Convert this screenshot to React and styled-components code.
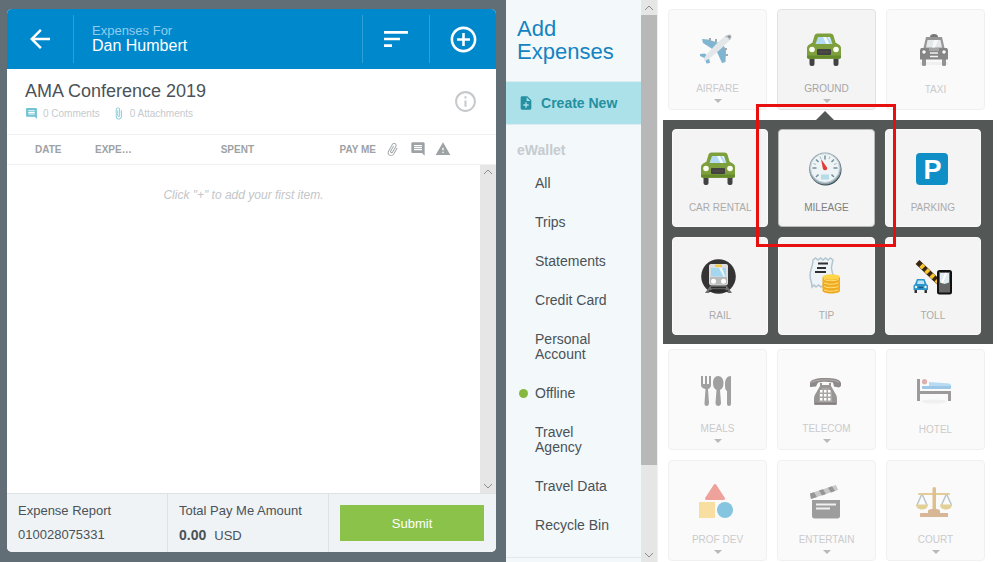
import React from "react";
import styled, { createGlobalStyle, css } from "styled-components";
import {
  MdArrowBack,
  MdSort,
  MdAddCircleOutline,
  MdInfoOutline,
  MdComment,
  MdAttachFile,
  MdWarning,
  MdNoteAdd,
} from "react-icons/md";

const GlobalStyle = createGlobalStyle`
  *, *::before, *::after { box-sizing: border-box; }
  body {
    margin: 0;
    background: #fff;
    color: #4a5257;
    font-family: "Liberation Sans", Arial, sans-serif;
    font-size: 14px;
  }
  h1, h2, h3, p, ul { margin: 0; padding: 0; font-weight: normal; }
  ul { list-style: none; }
  button { font: inherit; border: 0; padding: 0; background: none; cursor: pointer; }
  svg { display: block; flex: none; }
`;

const Page = styled.div`
  display: grid;
  grid-template-columns: minmax(0, 1fr) 152px 34%;
  height: 100vh;
  overflow: hidden;
`;

/* Report */

const Stage = styled.main`
  display: flex;
  min-height: 0;
  padding: 9px 10px 10px 7px;
  background: #616e76;
`;

const Report = styled.section`
  display: flex;
  flex: 1;
  flex-direction: column;
  min-width: 0;
  overflow: hidden;
  border-radius: 5px;
  background: #fff;
`;

const ReportBar = styled.header`
  display: flex;
  height: 60px;
  padding: 6px 0;
  background: #0088cd;
  color: #fff;
`;

const BarButton = styled.button`
  display: flex;
  align-items: center;
  justify-content: center;
  width: 67px;
  color: #fff;
  border: solid #2f9fd8;
  border-width: ${(p) => (p.$first ? "0 1px 0 0" : "0 0 0 1px")};
`;

const Owner = styled.div`
  flex: 1;
  padding: 9px 18px;
`;

const OwnerLabel = styled.p`
  font-size: 13px;
  line-height: 14px;
  color: #8fcdee;
`;

const OwnerName = styled.p`
  font-size: 16px;
  line-height: 16px;
`;

const Summary = styled.div`
  display: flex;
  align-items: center;
  justify-content: space-between;
  height: 66px;
  padding: 0 18px;
  border-bottom: 1px solid #f0f1f2;
`;

const SummaryText = styled.div`
  padding-bottom: 3px;
`;

const ReportTitle = styled.h1`
  font-size: 18px;
  line-height: 22px;
`;

const Counts = styled.div`
  display: flex;
  gap: 12px;
  padding-top: 5px;
`;

const Count = styled.span`
  display: flex;
  align-items: center;
  gap: 5px;
  font-size: 10px;
  line-height: 14px;
  color: #c6cacd;

  svg { color: #6fc3d3; }
`;

const InfoButton = styled.button`
  color: #c6cacd;
`;

const Columns = styled.table`
  width: 100%;
  table-layout: fixed;
  border-collapse: collapse;
`;

const Column = styled.th`
  width: ${(p) => p.$width || "auto"};
  height: 29px;
  padding: ${(p) => p.$pad || "0"};
  border-bottom: 1px solid #f0f1f2;
  font-size: 10px;
  font-weight: bold;
  color: #9da2a5;
  text-align: ${(p) => p.$align || "left"};

  svg { margin: 0 auto; }
`;

const Clip = styled(MdAttachFile)`
  transform: rotate(30deg);
`;

const Items = styled.div`
  display: flex;
  flex: 1;
  min-height: 0;
`;

const EmptyNote = styled.p`
  flex: 1;
  padding-top: 23px;
  font-size: 12px;
  line-height: 14px;
  font-style: italic;
  text-align: center;
  color: #c3c6c8;
`;

const Track = styled.div`
  display: flex;
  flex-direction: column;
  width: 16px;
  background: #e6e6e6;
`;

const TrackButton = styled.button`
  display: flex;
  align-items: center;
  justify-content: center;
  height: 15px;
`;

const Thumb = styled.div`
  flex: ${(p) => p.$share};
  background: ${(p) => (p.$clear ? "transparent" : "#b8b8b8")};
`;

const Totals = styled.footer`
  display: grid;
  grid-template-columns: 161fr 161fr 167fr;
  height: 59px;
  border-top: 1px solid #dde2e5;
  background: #eff3f6;
`;

const Total = styled.div`
  padding: 8px 11px;
  border-right: 1px solid #dde2e5;
  font-size: 13px;
  line-height: 18px;
  white-space: nowrap;

  p + p { padding-top: 6px; }
`;

const Amount = styled.strong`
  margin-right: 8px;
  font-size: 14px;
`;

const SubmitCell = styled.div`
  display: flex;
  padding: 11px 12px 11px 11px;
`;

const Submit = styled.button`
  flex: 1;
  height: 36px;
  background: #8bc34a;
  color: #fff;
  font-size: 13px;
`;

/* Sources */

const Sources = styled.aside`
  display: flex;
  min-height: 0;
  border-right: 1px solid #f0f0f0;
  background: #f3f8fb;
`;

const SourcesBody = styled.div`
  flex: 1;
  min-width: 0;
  overflow: hidden;
`;

const SourcesTitle = styled.h2`
  padding: 17px 11px 18px;
  font-size: 22px;
  line-height: 23px;
  color: #1483c2;
`;

const CreateNew = styled.button`
  display: flex;
  align-items: center;
  gap: 7px;
  width: 100%;
  height: 44px;
  padding: 0 12px;
  border: solid #d9ecf1;
  border-width: 1px 0;
  background: #ace1ea;
  color: #2490a0;
  font-weight: bold;
`;

const GroupTitle = styled.h3`
  padding: 18px 11px 6px;
  font-size: 14px;
  line-height: 15px;
  font-weight: bold;
  color: #c6cbce;
`;

const SourceList = styled.ul`
  padding-bottom: 12px;
  border-bottom: 1px solid #e2e8ec;
`;

const SourceLink = styled.a`
  display: grid;
  grid-template-columns: 9px 1fr;
  column-gap: 7px;
  align-items: center;
  padding: 12px 22px 12px 13px;
  line-height: 15px;
  color: inherit;
  text-decoration: none;
`;

const Dot = styled.span`
  width: 9px;
  height: 9px;
  border-radius: 50%;
  background: ${(p) => (p.$on ? "#86b840" : "transparent")};
`;

/* Expense types */

const Types = styled.section`
  display: flex;
  flex-direction: column;
  min-width: 0;
  padding-top: 9px;
  overflow: hidden;
`;

const TypeGrid = styled.div`
  display: grid;
  grid-template-columns: repeat(3, minmax(0, 1fr));
  gap: 10px;
  padding: 0 12px 0 10px;
`;

const SubTypes = styled(TypeGrid)`
  margin: 10px 4px 5px 5px;
  padding: 9px 12px 9px 9px;
  background: #535755;
`;

const highlight = css`
  &::after {
    content: "";
    position: absolute;
    z-index: 2;
    inset: -26px -22px -21px -23px;
    border: 3px solid #e8100f;
    pointer-events: none;
  }
`;

const pointer = css`
  &::before {
    content: "";
    position: absolute;
    z-index: 1;
    bottom: -11px;
    left: 50%;
    margin-left: -11px;
    border: solid transparent;
    border-width: 0 9px 9px;
    border-bottom-color: #535755;
  }
`;

const tones = {
  faded: css`background: #fafafa; border-color: #f0f0f0; color: #cbcbcb;`,
  open: css`background: #f4f4f4; border-color: #e2e2e2; color: #a6a6a6;`,
  plain: css`background: #f4f4f4; border-color: #fafafa; color: #ababab;`,
  marked: css`background: #f4f4f4; border-color: #b9bbba; color: #7d7d7d;`,
};

const Tile = styled.button`
  position: relative;
  display: flex;
  flex-direction: column;
  align-items: center;
  height: ${(p) => (p.$sub ? "98px" : "101px")};
  padding-top: ${(p) => (p.$sub ? "22px" : "23px")};
  border: 1px solid;
  border-radius: 4px;
  ${(p) => tones[p.$tone]}
  ${(p) => p.$tone === "open" && pointer}
  ${(p) => p.$tone === "marked" && highlight}
`;

const TileLabel = styled.span`
  padding-top: ${(p) => (p.$low ? "16px" : "15px")};
  font-size: 10px;
  line-height: 12px;
  white-space: nowrap;
`;

const Caret = styled.span`
  margin-top: 4px;
  border: solid transparent;
  border-width: 4px 4px 0;
  border-top-color: #b9b9b9;
`;

const Art = ({ children }) => (
  <svg width="39" height="35" viewBox="0 0 39 35" overflow="visible" aria-hidden="true">
    {children}
  </svg>
);

const Chevron = ({ up }) => (
  <svg width="10" height="6" viewBox="0 0 10 6" fill="none" stroke="#8c8c8c" aria-hidden="true">
    <path d={up ? "M1 5l4-4 4 4" : "M1 1l4 4 4-4"} />
  </svg>
);

const Plane = () => (
  <Art>
    <path d="M4 6l6 .5L24 11l4 5-.5 13-3.500 1L19 19 5 10z" fill="#7fb5d0" />
    <path d="M2 21l5-.5 4 4.500 1 5-3.500.5-2-5.500L2 23z" fill="#7fb5d0" />
    <path d="M11 5h2v3h-2zM17 6h2v3h-2zM26 15h3v2h-3zM27 21h3v2h-3z" fill="#a3abb0" />
    <path d="M6 26c1-4 14-17 20-22 3-2.500 6-3 7-2s0 4-2 6C25 14 12 26 8 27.500c-1.500.5-2.500 0-2-1.500z" fill="#e3e7ea" />
    <path d="M27 3.500c2-1.500 5-2.200 6-1.500.8 1 .3 3-1 5l-1.500-.5.5-2-2 .3z" fill="#b9bdc0" />
    <path d="M30 2.500l2.500 1-.5 2-2-1z" fill="#8b8f92" />
  </Art>
);

const Car = () => (
  <Art>
    <rect x="2.500" y="23" width="5" height="10" rx="2" fill="#424242" />
    <rect x="26.500" y="23" width="5" height="10" rx="2" fill="#424242" />
    <path d="M10.500.5h13c1.500 0 2.500.8 3 2l2 7 4 2.500c1 .7 1.500 2 1.500 3.500V24c0 1-.7 1.700-1.700 1.700H1.700C.7 25.700 0 25 0 24v-8.500c0-1.500.5-2.800 1.500-3.500l4-2.500 2-7c.5-1.200 1.500-2 3-2z" fill="#7ea03c" />
    <path d="M0 22.500h34V24c0 1-.7 1.700-1.700 1.700H1.700C.7 25.700 0 25 0 24z" fill="#658a2c" />
    <path d="M11 4h12l2.500 7h-17z" fill="#b5dbf3" />
    <path d="M16 4h3l3.500 7h-3zM21 4h1.500l2 5.500z" fill="#f2fafd" />
    <circle cx="5" cy="16.500" r="2.800" fill="#fbfdf0" />
    <circle cx="29" cy="16.500" r="2.800" fill="#fbfdf0" />
    <rect x="10" y="16" width="14" height="6" rx="1" fill="#424242" />
    <path d="M12 19h10" stroke="#5d5148" />
  </Art>
);

const Taxi = () => (
  <Art>
    <path d="M4 29h28v3H4z" fill="#f0f0f0" />
    <rect x="6" y="24" width="4" height="9" rx="1.500" fill="#929292" />
    <rect x="26" y="24" width="4" height="9" rx="1.500" fill="#929292" />
    <path d="M14 4c0-2 1.500-3 4-3s4 1 4 3z" fill="#777" />
    <path d="M10 4h16l2.500 11h-21z" fill="#969696" />
    <path d="M11.500 7h13l1.500 7.500H10z" fill="#e4e8e9" />
    <path d="M18 7h4l-3 7.500h-3z" fill="#f7f9f9" />
    <path d="M5 15h26l1 2v9.500H4V17z" fill="#868686" />
    <path d="M13 15h10v3H13z" fill="#a5a5a5" />
    <circle cx="8" cy="19" r="2.300" fill="#fafafa" stroke="#777" />
    <circle cx="28" cy="19" r="2.300" fill="#fafafa" stroke="#777" />
    <path d="M14 20h8M14 23.500h8" stroke="#f2f2f2" strokeWidth="1.500" />
  </Art>
);

const Gauge = () => (
  <Art>
    <circle cx="18.500" cy="17.500" r="16" fill="#37474f" />
    <circle cx="18" cy="16.500" r="16" fill="#8fa4ae" />
    <circle cx="18" cy="16" r="14.500" fill="#eef3f5" stroke="#c3d0d6" />
    <g stroke="#78909c" strokeWidth="1.500">
      <path d="M18 3.500v4M5.500 16h4M26.500 16h4M9 7.500l2.500 2.500M27 7.500L24.500 10M9 25l2.500-2.500M27 25l-2.500-2.500" />
    </g>
    <path d="M13 4.500l1 2.500M23 4.500L22 7M6.500 11.500l2.500 1M29.500 11.500l-2.500 1" stroke="#a9bac2" />
    <rect x="14" y="22.500" width="8" height="5" fill="#b4dce9" />
    <path d="M14 7l6 8.500c.7 1.500-.5 3-2 2.800-1.200 0-2-.8-2.200-2z" fill="#e53935" />
  </Art>
);

const Parking = () => (
  <Art>
    <rect x="3" y="1" width="32" height="32" rx="4" fill="#0f8fc5" />
    <text x="19.500" y="26.500" textAnchor="middle" fontFamily="Liberation Sans, Arial, sans-serif" fontSize="27" fontWeight="bold" fill="#fff">P</text>
  </Art>
);

const Rail = () => (
  <Art>
    <circle cx="17.500" cy="16.500" r="17.300" fill="#353334" />
    <path d="M9 26l-5 7h4l3-4h13l3 4h4l-5-7z" fill="#6f6f6f" />
    <path d="M10 27.500h15M8 31h19" stroke="#2d2d2d" strokeWidth="1.500" />
    <path d="M10 4h15c1.500 0 2 1 2 2v17c0 1.500-1 2.500-2.500 2.500h-14C9 25.500 8 24.500 8 23V6c0-1 .5-2 2-2z" fill="#dcdedf" />
    <path d="M9 17h17v5.500c0 1-.8 2-2 2H11c-1.200 0-2-1-2-2z" fill="#b9bbbb" />
    <rect x="14" y="4.500" width="7" height="2.500" fill="#f3ca4a" />
    <rect x="10" y="8" width="15" height="8.500" fill="#a3d6ef" />
    <path d="M18 8h3l3 8.500h-1.500z" fill="#eef8fd" />
    <circle cx="12.500" cy="21.300" r="2.500" fill="#fff" />
    <circle cx="22.500" cy="21.300" r="2.500" fill="#fff" />
  </Art>
);

const Coin = ({ y }) => (
  <>
    <path d={`M15.500 ${y}v3c0 1.800 4 3 8.800 3s8.700-1.200 8.700-3v-3z`} fill="#f0a71e" />
    <ellipse cx="24.250" cy={y} rx="8.750" ry="2.700" fill="#ffd54a" />
    <path d={`M17 ${y + 2.500}c3 1.700 11 1.700 14.500 0`} stroke="#ffe078" fill="none" />
  </>
);

const Tip = () => (
  <Art>
    <path d="M6 0l2.500-2 2.500 2 2.500-2L16 0l2.500-2L21 0l2.500-2L26 0c-.5 3-1.500 5-1.500 8s1.500 5 1.500 8v9l-2 2-2.500-2-2.500 2-2.500-2-2.500 2-2.500-2L9 27l-2-2-2 2c0-5-2-7-2-12S6 6 6 0z" fill="#edf3f6" stroke="#b3c6cf" strokeWidth="1.500" />
    <path d="M11 3.500h10M10 8h9M8 12h11" stroke="#303030" strokeWidth="1.800" />
    <Coin y={27.500} />
    <Coin y={24} />
    <Coin y={20.500} />
    <Coin y={17} />
  </Art>
);

const Toll = () => (
  <Art>
    <path d="M4.500 2L26 22.500" stroke="#3a2412" strokeWidth="5.500" />
    <path d="M8 5.300L26 22.500" stroke="#f7c62f" strokeWidth="5" strokeDasharray="3.500 3.500" />
    <rect x="25" y="11" width="13" height="22.500" rx="1.500" fill="#666" stroke="#111" strokeWidth="2" />
    <path d="M27 13h9v9.500l-4.500 1.500-4.500-1.500z" fill="#dfeaf1" />
    <path d="M33 13l-4 10" stroke="#fff" strokeWidth="2" />
    <rect x="1.500" y="29" width="2.500" height="4" fill="#333" />
    <rect x="11.500" y="29" width="2.500" height="4" fill="#333" />
    <path d="M4 19h7.500l2 5 1.500 1.500V30H.5v-4.500L2 24z" fill="#2b95cc" />
    <path d="M5 20.500h5.500l1 3.500H4z" fill="#bfe4f6" />
    <circle cx="3" cy="27" r="1.200" fill="#e8f6fc" />
    <circle cx="12.500" cy="27" r="1.200" fill="#e8f6fc" />
    <path d="M5.500 27.500h4.500" stroke="#16597d" strokeWidth="1.500" />
  </Art>
);

const Meals = () => (
  <Art>
    <g fill="#a0a0a0">
      <path d="M3 3h2v8h2V3h2v8h2V3h2v9c0 2-1.200 3.500-3 4l1 14c0 4-5 4-4.500 0l1-14C4.500 15.500 3 14 3 12z" />
      <path d="M20 3c3.500 0 5.500 3 5.500 7s-1.500 6-3.500 7l1 13c0 4-5.500 4-5.500 0l1-13c-2-1-3.500-3-3.500-7s2-7 5-7z" />
      <path d="M33 3v28c0 2.500-4 2.500-4 0V18c-2-1-2-4-2-7 0-5 2-8 6-8z" />
    </g>
  </Art>
);

const Phone = () => (
  <Art>
    <path d="M3 10c0-3 6-5 15-5s15 1 16 5v3l-2 1.500-5-1-1-4c-5-1-11-1-15 0l-2 4-6 .5z" fill="#8e8a8a" />
    <path d="M4 9.500c4-3 24-4 28 0" stroke="#b5b1b1" fill="none" />
    <path d="M13 10v3l-4 7c-1.500 2-2 4-2 6v4.500c0 1 .7 1.500 1.500 1.500h20c.8 0 1.500-.5 1.500-1.500V26c0-2-.5-4-2-6l-4-7v-3h-2v2h-7v-2z" fill="#999595" />
    <path d="M15 15h7l3 5v9H12v-9z" fill="#aaa6a6" />
    <g fill="#fff">
      {[17, 21, 25].map((y) =>
        [13, 17, 21].map((x) => <rect key={`${x}-${y}`} x={x} y={y} width="2.500" height="2.500" />)
      )}
    </g>
    <path d="M8 30.500h21" stroke="#827e7e" strokeWidth="1.500" />
  </Art>
);

const Bed = () => (
  <Art>
    <ellipse cx="18" cy="28.500" rx="13" ry="2" fill="#f0f0f0" />
    <path d="M1 6h3v12h31v10h-3v-7H4v7H1z" fill="#9c9a9b" />
    <circle cx="8.500" cy="8.700" r="2.600" fill="#ddb2ac" />
    <path d="M13 9l20 1.500c1.500.3 2 1 2 2V14H13z" fill="#b6dbf2" />
    <path d="M6 13h29v1.500c0 1-.7 1.500-1.500 1.500H7.500C6.500 16 6 15.500 6 14.500z" fill="#9cc8e6" />
  </Art>
);

const Shapes = () => (
  <Art>
    <path d="M17 1.500L25.500 14.500H8.500z" fill="#efa29b" stroke="#efa29b" strokeWidth="3" strokeLinejoin="round" />
    <rect x="1" y="18" width="16" height="16" fill="#f8dfa1" />
    <circle cx="27" cy="26" r="8" fill="#86c5df" />
  </Art>
);

const Clapper = () => (
  <Art>
    <path d="M3 9.500L29 1l2 5-27 9z" fill="#c8c8c8" />
    <path d="M3 9.500l4-1.300 3 4.800-6 2zM12 6.500l4-1.300 3 4.800-4 1.400zM21 3.700l4-1.400 3 4.700-4 1.400z" fill="#969696" />
    <path d="M5 16h28v16c0 1.500-1 2.500-2.500 2.500h-23C6 34.500 5 33.500 5 32z" fill="#9d9d9d" />
    <path d="M9 20.500h20M9 24.500h14" stroke="#f0f0f0" strokeWidth="2" />
  </Art>
);

const Scales = () => (
  <Art>
    <path d="M5.500 11L1 21M6.500 11L11 21M30 11l-4.500 10M31 11l4.500 10" stroke="#b9c5cb" strokeWidth="1.500" />
    <rect x="2" y="9" width="32" height="2" rx="1" fill="#e4cc98" />
    <rect x="16.500" y="3" width="3.500" height="25" rx="1.500" fill="#dec08f" />
    <path d="M0 20.500h12c0 3-2.500 5-6 5s-6-2-6-5zM24 20.500h12c0 3-2.500 5-6 5s-6-2-6-5z" fill="#e3d096" />
    <path d="M12 27c0-1.500 2-2 6-2s6 .5 6 2v2h8v4H4v-3c0-.7.5-1 1-1h7z" fill="#d7b795" />
  </Art>
);

const ROWS = [
  [
    { label: "AIRFARE", Icon: Plane, more: true },
    { label: "GROUND", Icon: Car, more: true, tone: "open" },
    { label: "TAXI", Icon: Taxi },
  ],
  [
    { label: "MEALS", Icon: Meals, more: true },
    { label: "TELECOM", Icon: Phone, more: true },
    { label: "HOTEL", Icon: Bed },
    { label: "PROF DEV", Icon: Shapes, more: true },
    { label: "ENTERTAIN", Icon: Clapper, more: true },
    { label: "COURT", Icon: Scales, more: true },
  ],
];

const GROUND = [
  { label: "CAR RENTAL", Icon: Car },
  { label: "MILEAGE", Icon: Gauge, tone: "marked" },
  { label: "PARKING", Icon: Parking },
  { label: "RAIL", Icon: Rail },
  { label: "TIP", Icon: Tip },
  { label: "TOLL", Icon: Toll },
];

const SOURCES = [
  "All",
  "Trips",
  "Statements",
  "Credit Card",
  "Personal Account",
  "Offline",
  "Travel Agency",
  "Travel Data",
  "Recycle Bin",
];

const TypeTile = ({ label, Icon, more, tone, sub }) => (
  <Tile type="button" $sub={sub} $tone={tone || (sub ? "plain" : "faded")}>
    <Icon />
    <TileLabel $low={!sub && !more}>{label}</TileLabel>
    {more && <Caret />}
  </Tile>
);

export default function App() {
  return (
    <>
      <GlobalStyle />
      <Page>
        <Stage>
          <Report>
            <ReportBar>
              <BarButton type="button" $first aria-label="Back">
                <MdArrowBack size={30} />
              </BarButton>
              <Owner>
                <OwnerLabel>Expenses For</OwnerLabel>
                <OwnerName>Dan Humbert</OwnerName>
              </Owner>
              <BarButton type="button" aria-label="Sort">
                <MdSort size={32} />
              </BarButton>
              <BarButton type="button" aria-label="Add expense">
                <MdAddCircleOutline size={31} />
              </BarButton>
            </ReportBar>
            <Summary>
              <SummaryText>
                <ReportTitle>AMA Conference 2019</ReportTitle>
                <Counts>
                  <Count>
                    <MdComment size={13} />0 Comments
                  </Count>
                  <Count>
                    <MdAttachFile size={13} />0 Attachments
                  </Count>
                </Counts>
              </SummaryText>
              <InfoButton type="button" aria-label="Report details">
                <MdInfoOutline size={25} />
              </InfoButton>
            </Summary>
            <Columns>
              <thead>
                <tr>
                  <Column $width="88px" $pad="0 0 0 28px">DATE</Column>
                  <Column $width="62px">EXPE…</Column>
                  <Column $align="right">SPENT</Column>
                  <Column $width="126px" $align="right" $pad="0 4px 0 0">PAY ME</Column>
                  <Column $width="25px" aria-label="Attachments"><Clip size={15} /></Column>
                  <Column $width="25px" aria-label="Comments"><MdComment size={16} /></Column>
                  <Column $width="25px" aria-label="Warnings"><MdWarning size={16} /></Column>
                  <Column $width="41px" aria-hidden="true" />
                </tr>
              </thead>
            </Columns>
            <Items>
              <EmptyNote>Click "+" to add your first item.</EmptyNote>
              <Track>
                <TrackButton type="button" aria-label="Scroll up"><Chevron up /></TrackButton>
                <Thumb $share={1} $clear />
                <TrackButton type="button" aria-label="Scroll down"><Chevron /></TrackButton>
              </Track>
            </Items>
            <Totals>
              <Total>
                <p>Expense Report</p>
                <p>010028075331</p>
              </Total>
              <Total>
                <p>Total Pay Me Amount</p>
                <p><Amount>0.00</Amount>USD</p>
              </Total>
              <SubmitCell>
                <Submit type="button">Submit</Submit>
              </SubmitCell>
            </Totals>
          </Report>
        </Stage>

        <Sources>
          <SourcesBody>
            <SourcesTitle>Add Expenses</SourcesTitle>
            <CreateNew type="button">
              <MdNoteAdd size={16} />
              Create New
            </CreateNew>
            <GroupTitle>eWallet</GroupTitle>
            <SourceList>
              {SOURCES.map((name) => (
                <li key={name}>
                  <SourceLink href="#">
                    <Dot $on={name === "Offline"} />
                    {name}
                  </SourceLink>
                </li>
              ))}
            </SourceList>
          </SourcesBody>
          <Track>
            <TrackButton type="button" aria-label="Scroll up"><Chevron up /></TrackButton>
            <Thumb $share={450} />
            <Thumb $share={82} $clear />
            <TrackButton type="button" aria-label="Scroll down"><Chevron /></TrackButton>
          </Track>
        </Sources>

        <Types>
          <TypeGrid>
            {ROWS[0].map((t) => <TypeTile key={t.label} {...t} />)}
          </TypeGrid>
          <SubTypes>
            {GROUND.map((t) => <TypeTile key={t.label} {...t} sub />)}
          </SubTypes>
          <TypeGrid>
            {ROWS[1].map((t) => <TypeTile key={t.label} {...t} />)}
          </TypeGrid>
        </Types>
      </Page>
    </>
  );
}
